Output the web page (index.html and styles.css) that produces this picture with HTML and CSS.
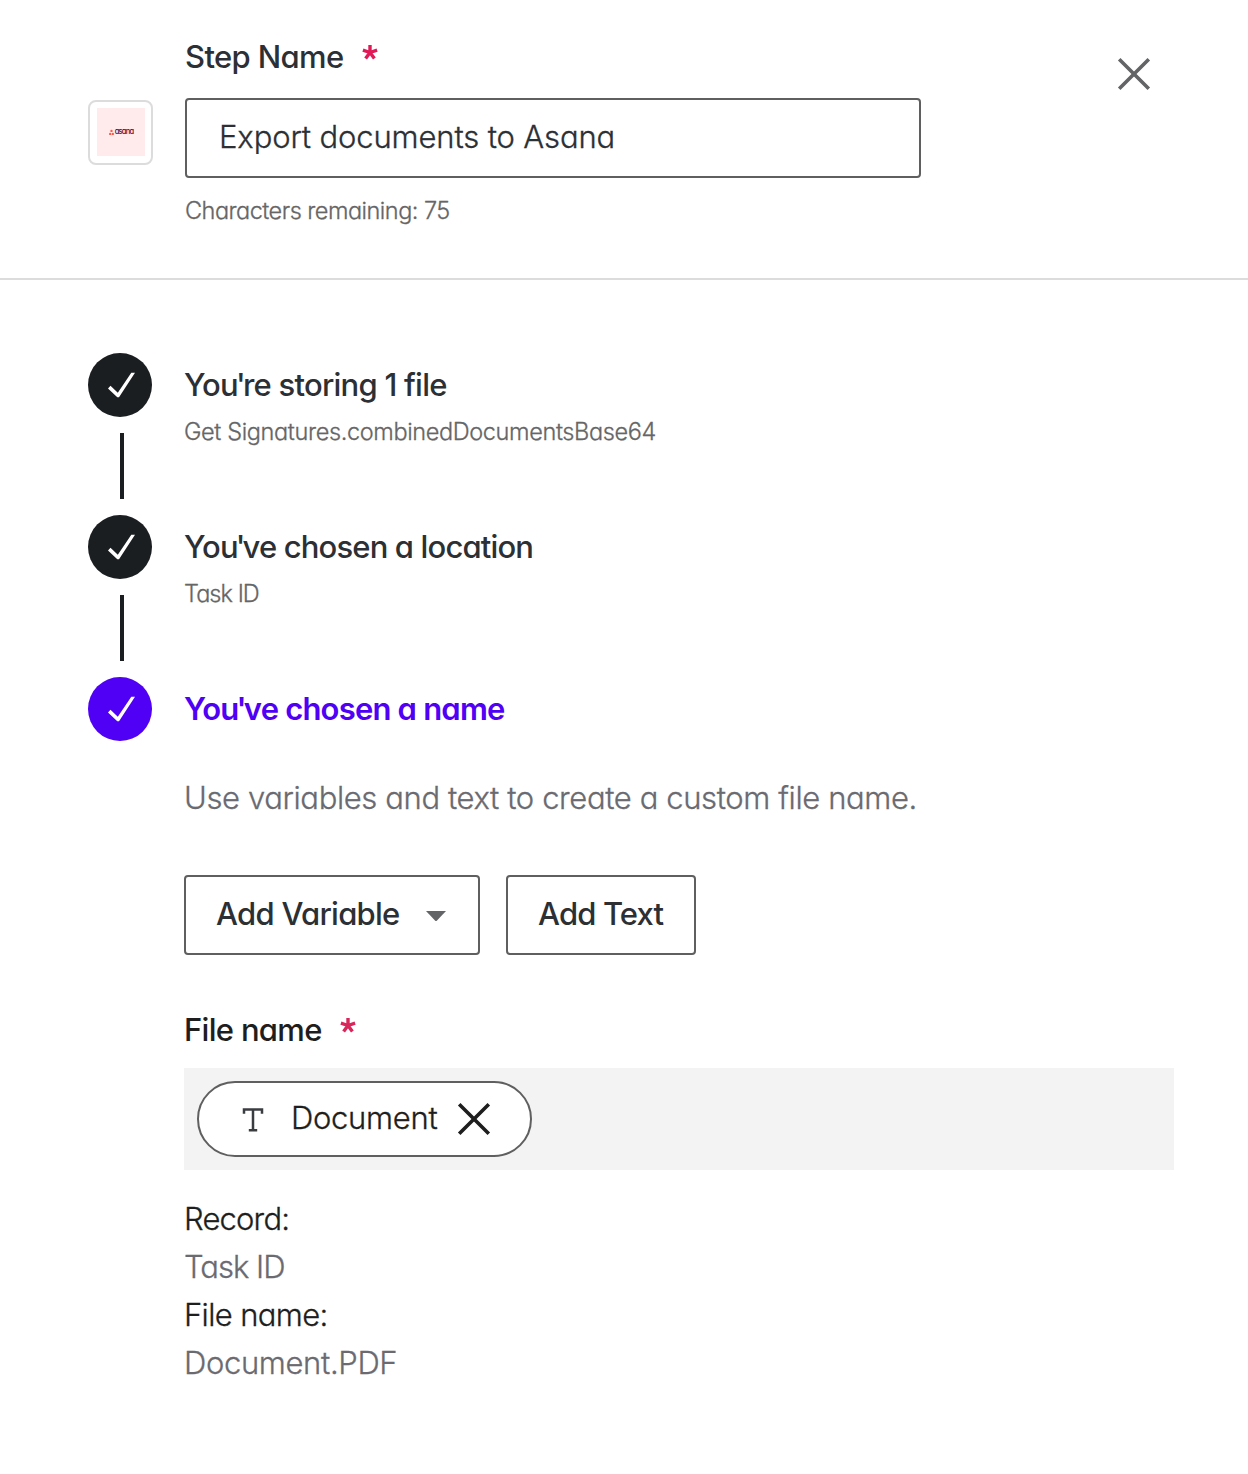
FILE: index.html
```html
<!DOCTYPE html>
<html lang="en">
<head>
<meta charset="utf-8">
<title>Export documents to Asana</title>
<link rel="stylesheet" href="styles.css">
</head>
<body>
<header class="header">
  <div class="app-icon"><div class="app-tile">
    <svg class="app-mark" viewBox="0 0 6 7"><circle cx="3" cy="1.6" r="1.4"/><circle cx="1.4" cy="5.2" r="1.4"/><circle cx="4.6" cy="5.2" r="1.4"/></svg><span class="app-word">asana</span>
  </div></div>
  <div class="step-field">
    <div class="label"><span class="t-step">Step Name</span><svg class="required" viewBox="0 0 16 16"><path d="M8 8.5V1M8 8.5L.9 6.2M8 8.5l7.1-2.3M8 8.5L3.6 14.5M8 8.5l4.4 6"/></svg></div>
    <div class="input"><span class="t-export">Export documents to Asana</span></div>
    <div class="hint"><span class="t-chars">Characters remaining: 75</span></div>
  </div>
  <svg class="close" viewBox="0 0 32 32"><path d="M1.2 1.2l29.6 29.6M30.8 1.2L1.2 30.8"/></svg>
</header>
<main class="steps">
  <section class="step">
    <div class="rail"><svg class="badge" viewBox="0 0 64 64"><circle cx="32" cy="32" r="32"/><path d="M43.3 19.7H47L31 44.3H29.3L20 35.5l2.5-2.8 7.3 7.1z"/></svg><div class="line"></div></div>
    <div class="body"><h2 class="title"><span class="t-storing">You<span class="apos">'</span>re storing 1 file</span></h2><p class="sub"><span class="t-get">Get Signatures.combinedDocumentsBase64</span></p></div>
  </section>
  <section class="step">
    <div class="rail"><svg class="badge" viewBox="0 0 64 64"><circle cx="32" cy="32" r="32"/><path d="M43.3 19.7H47L31 44.3H29.3L20 35.5l2.5-2.8 7.3 7.1z"/></svg><div class="line"></div></div>
    <div class="body"><h2 class="title"><span class="t-location">You<span class="apos">'</span>ve chosen a location</span></h2><p class="sub"><span class="t-task">Task ID</span></p></div>
  </section>
  <section class="step">
    <div class="rail"><svg class="badge current" viewBox="0 0 64 64"><circle cx="32" cy="32" r="32"/><path d="M43.3 19.7H47L31 44.3H29.3L20 35.5l2.5-2.8 7.3 7.1z"/></svg></div>
    <div class="body">
      <h2 class="title active"><span class="t-name">You<span class="apos">'</span>ve chosen a name</span></h2>
      <p class="intro"><span class="t-use">Use variables and text to create a custom file name.</span></p>
      <div class="buttons">
        <button class="button variable"><span class="t-addvar">Add Variable</span><svg class="caret" viewBox="0 0 20 10"><path d="M0 0h20L11 9.5q-1 1-2 0z"/></svg></button>
        <button class="button text"><span class="t-addtext">Add Text</span></button>
      </div>
      <div class="label file-label"><span class="t-file">File name</span><svg class="required" viewBox="0 0 16 16"><path d="M8 8.5V1M8 8.5L.9 6.2M8 8.5l7.1-2.3M8 8.5L3.6 14.5M8 8.5l4.4 6"/></svg></div>
      <div class="tokens"><div class="chip">
        <svg class="type" viewBox="0 0 20 24"><path d="M1 5.8V1.6h18v4.2M10 1.6v20.6M5.8 22.3h8.4"/></svg>
        <span class="t-doc">Document</span>
        <svg class="remove" viewBox="0 0 32 32"><path d="M1.2 1.2l29.6 29.6M30.8 1.2L1.2 30.8"/></svg>
      </div></div>
      <dl class="summary">
        <dt><span class="t-record">Record:</span></dt><dd><span class="t-task2">Task ID</span></dd>
        <dt><span class="t-file2">File name:</span></dt><dd><span class="t-pdf">Document.PDF</span></dd>
      </dl>
    </div>
  </section>
</main>
</body>
</html>
```
FILE: styles.css
```css
* { box-sizing: border-box; }
body {
  margin: 0;
  background: #fff;
  color: #2c3035;
  font-family: Inter, "Open Sans", sans-serif;
  font-size: 31px;
  font-feature-settings: "cv11";
}
h2, p, dl, dd { margin: 0; }
span { white-space: nowrap; }
svg { display: block; flex: none; overflow: visible; }

.header {
  display: flex;
  height: 280px;
  padding: 34px 98px 0 88px;
  border-bottom: 2px solid #dcdcdc;
}
.app-icon {
  width: 65px;
  height: 65px;
  margin: 66px 32px 0 0;
  padding: 6px 7px;
  border: 2px solid #dcdcdc;
  border-radius: 8px;
}
.app-tile {
  display: flex;
  align-items: center;
  justify-content: center;
  gap: 1px;
  width: 48px;
  height: 48px;
  background: #ffeaec;
}
.app-mark { width: 5px; height: 7px; fill: #ff584a; }
.app-word { color: #690031; font-size: 7.5px; font-weight: 500; letter-spacing: -0.8px; line-height: 8px; }
.step-field { width: 736px; }
.label { display: flex; height: 46px; font-weight: 500; line-height: 46px; }
.required { width: 16px; height: 16px; margin: 10px 0 0 18px; fill: none; stroke: #e01a59; stroke-width: 3.4; }
.input {
  height: 80px;
  margin-top: 18px;
  padding-left: 32px;
  border: 2px solid #5f5f5f;
  border-radius: 4px;
  line-height: 73px;
}
.input, .hint, .sub, .intro, .chip, .summary {
  font-weight: 350;
  -webkit-text-stroke: 0.3px currentColor;
}
.hint { margin-top: 17px; color: #666; font-size: 23.5px; line-height: 32px; }
.close { width: 32px; height: 32px; margin: 24px 0 0 auto; fill: none; stroke: #636466; stroke-width: 3.6; }

.steps { padding: 73px 74px 0 88px; }
.step { display: flex; gap: 32px; }
.rail { width: 64px; flex: none; }
.badge { width: 64px; height: 64px; fill: #1a1e21; }
.badge path { fill: #fff; }
.badge.current { fill: #4f00f5; }
.line { width: 4px; height: 66px; margin: 16px 0 16px 32px; background: #1a1e21; }
.body { flex: 1; min-width: 0; }
.title { font-size: 31px; font-weight: 500; line-height: 64px; }
.title.active { color: #4f00f5; font-weight: 600; }
.apos { margin: 0 -2px; }
.sub { color: #666; font-size: 23.5px; line-height: 30px; }
.intro { margin-top: 33px; color: #6a6a70; line-height: 48px; }
.buttons { display: flex; gap: 26px; margin-top: 53px; }
.button {
  display: flex;
  align-items: center;
  height: 80px;
  padding: 0 0 3px 30px;
  border: 2px solid #5f5f5f;
  border-radius: 4px;
  background: #fff;
  color: #2c3035;
  font: inherit;
  font-weight: 500;
  font-feature-settings: inherit;
}
.variable { width: 296px; }
.text { width: 190px; }
.caret { width: 20px; height: 10px; margin: 4px 0 0 26.5px; fill: #636466; }
.file-label { margin-top: 52px; color: #1e1e1e; }
.file-label .required { stroke: #d8265a; }
.tokens { height: 102px; margin-top: 15px; padding: 13px; background: #f3f3f3; }
.chip {
  display: flex;
  align-items: center;
  width: 335px;
  height: 76px;
  padding: 0 0 4px 44px;
  border: 2px solid #5f5f5f;
  border-radius: 38px;
  background: #fff;
  color: #1e1e1e;
}
.type { width: 20px; height: 24px; margin: 6px 28px 0 0; fill: none; stroke: #3a3d40; stroke-width: 2.5; }
.remove { width: 32px; height: 32px; margin: 4px 0 0 20.5px; fill: none; stroke: #1e1e1e; stroke-width: 3.6; }
.summary { margin-top: 25px; line-height: 48px; }
.summary dt { color: #1e1e1e; }
.summary dd { color: #6a6a70; }

.t-step { letter-spacing: -0.64px; }
.t-export { letter-spacing: -0.14px; }
.t-chars { letter-spacing: -0.52px; }
.t-storing { letter-spacing: -0.76px; }
.t-get { letter-spacing: -0.37px; }
.t-location { letter-spacing: -0.85px; }
.t-task { letter-spacing: -0.95px; }
.t-name { letter-spacing: -0.8px; }
.t-use { letter-spacing: -0.39px; }
.t-addvar { letter-spacing: -0.73px; }
.t-addtext { letter-spacing: -0.86px; }
.t-file { letter-spacing: -0.69px; }
.t-doc { letter-spacing: -0.3px; }
.t-record { letter-spacing: -0.83px; }
.t-task2 { letter-spacing: -1px; }
.t-file2 { letter-spacing: -0.65px; }
.t-pdf { letter-spacing: -0.36px; }
```
